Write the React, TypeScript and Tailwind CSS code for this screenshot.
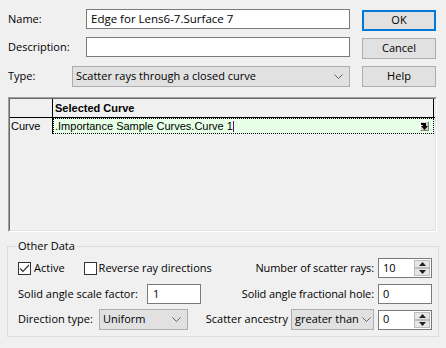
import React from "react"

const ui = "font-['Open_Sans',sans-serif] text-[11px] text-black"

function Chevron() {
  return (
    <svg width="9" height="5" viewBox="0 0 9 5" className="shrink-0">
      <path d="M0.5 0.5 L4.5 4.5 L8.5 0.5" fill="none" stroke="#606060" strokeWidth="1" />
    </svg>
  )
}

function Select({ value, className }: { value: string; className: string }) {
  return (
    <div className={`flex items-center justify-between bg-[#e1e1e1] border border-[#adadad] pl-[3px] pr-[6px] ${className}`}>
      <span className="whitespace-nowrap">{value}</span>
      <Chevron />
    </div>
  )
}

function Spinner({ value }: { value: string }) {
  return (
    <div className="flex items-center w-[54px] h-[20px] bg-white border border-[#7a7a7a] pl-[4px] pr-[1px]">
      <span className="flex-1">{value}</span>
      <div className="flex flex-col w-[16px] h-[16px]">
        {[0, 1].map((i) => (
          <div key={i} className="flex-1 flex items-center justify-center bg-[#e6e6e6] border border-[#bcbcbc]">
            <svg width="7" height="4" viewBox="0 0 7 4">
              <path d={i === 0 ? "M3.5 0 L7 4 L0 4 Z" : "M0 0 L7 0 L3.5 4 Z"} fill="#222" />
            </svg>
          </div>
        ))}
      </div>
    </div>
  )
}

function Checkbox({ checked }: { checked: boolean }) {
  return (
    <div className="w-[13px] h-[13px] bg-white border border-[#333] flex items-center justify-center">
      {checked && (
        <svg width="11" height="9" viewBox="0 0 11 9">
          <path d="M1 4.5 L4 7.5 L10 1" fill="none" stroke="#333" strokeWidth="1.2" />
        </svg>
      )}
    </div>
  )
}

function Button({ label, focus }: { label: string; focus?: boolean }) {
  return (
    <div
      className={`h-[21px] flex items-center justify-center bg-[#e1e1e1] ${
        focus ? "border-2 border-[#0078d7]" : "border border-[#adadad]"
      }`}
    >
      {label}
    </div>
  )
}

export default function App() {
  return (
    <div className={`w-[446px] h-[348px] bg-[#f0f0f0] overflow-hidden ${ui}`}>
      {/* top fields + buttons */}
      <div className="flex pt-[9px] pl-[8px]">
        <div className="w-[342px] flex flex-col">
          <div className="flex items-center h-[20px]">
            <span className="w-[78px]">Name:</span>
            <div className="w-[264px] h-[20px] bg-white border border-[#7a7a7a] flex items-center px-[4px] text-[11.5px]">
              Edge for Lens6-7.Surface 7
            </div>
          </div>
          <div className="flex items-center h-[20px] mt-[8px]">
            <span className="w-[78px]">Description:</span>
            <div className="w-[264px] h-[20px] bg-white border border-[#7a7a7a]" />
          </div>
          <div className="flex items-center h-[21px] mt-[9px]">
            <span className="w-[64px]">Type:</span>
            <Select value="Scatter rays through a closed curve" className="w-[278px] h-[21px]" />
          </div>
        </div>
        <div className="w-[74px] ml-[12px] flex flex-col pt-[1px] gap-[7px]">
          <Button label="OK" focus />
          <Button label="Cancel" />
          <Button label="Help" />
        </div>
      </div>

      {/* curve grid */}
      <div className="mx-[8px] mt-[10px] h-[135px] w-[429px] border border-t-[#a0a0a0] border-l-[#a0a0a0] border-b-white border-r-white">
        <div className="h-full border border-t-[#696969] border-l-[#696969] border-b-[#e3e3e3] border-r-[#e3e3e3] font-['Liberation_Sans',Arial,sans-serif] text-[11px]">
          <div className="flex h-[19px] border-b border-black">
            <div className="w-[43px] border-r border-black" />
            <div className="w-[381px] border-r border-black font-bold pl-[2px] flex items-center">Selected Curve</div>
          </div>
          <div className="flex h-[16px]">
            <div className="w-[43px] border-r border-black flex items-center pl-[1px]">Curve</div>
            <div className="w-[381px] bg-[#e6ffe6] border border-dotted border-black flex items-center justify-between pl-[1px] pr-[4px]">
              <span>
                .Importance Sample Curves.Curve 1<span className="inline-block w-px h-[11px] bg-[#800080] align-middle" />
              </span>
              <div className="w-[9px] h-[10px] bg-[#d4d0c8] border border-t-white border-l-white border-b-[#808080] border-r-[#808080] flex items-center justify-center">
                <svg width="7" height="7" viewBox="0 0 7 7">
                  <path d="M0 0 H5 V3 H7 L3.5 7 L0 3 H2 V2 H0 Z" fill="#000" />
                </svg>
              </div>
            </div>
          </div>
        </div>
      </div>

      {/* group box */}
      <div className="relative mx-[7px] mt-[14px] h-[91px] border border-[#dcdcdc] pt-[11px] pl-[10px] pr-[6px]">
        <span className="absolute -top-[9px] left-[8px] px-[2px] bg-[#f0f0f0]">Other Data</span>
        <div className="flex items-center justify-between h-[20px]">
          <div className="flex items-center">
            <Checkbox checked />
            <span className="ml-[3px]">Active</span>
            <div className="ml-[19px]"><Checkbox checked={false} /></div>
            <span className="ml-[2px]">Reverse ray directions</span>
          </div>
          <div className="flex items-center gap-[4px]">
            <span className="tracking-[-0.1px]">Number of scatter rays:</span>
            <Spinner value="10" />
          </div>
        </div>
        <div className="flex items-center justify-between h-[20px] mt-[6px]">
          <div className="flex items-center">
            <span className="w-[129px]">Solid angle scale factor:</span>
            <div className="w-[54px] h-[20px] bg-white border border-[#7a7a7a] flex items-center px-[5px]">1</div>
          </div>
          <div className="flex items-center gap-[4px]">
            <span className="tracking-[-0.1px]">Solid angle fractional hole:</span>
            <div className="w-[54px] h-[20px] bg-white border border-[#7a7a7a] flex items-center px-[4px]">0</div>
          </div>
        </div>
        <div className="flex items-center justify-between h-[21px] mt-[5px]">
          <div className="flex items-center">
            <span className="w-[81px]">Direction type:</span>
            <Select value="Uniform" className="w-[89px] h-[21px]" />
          </div>
          <div className="flex items-center">
            <span className="mr-[3px]">Scatter ancestry</span>
            <Select value="greater than" className="w-[83px] h-[21px] pl-[2px] pr-[3px] gap-[3px]" />
            <div className="ml-[4px]"><Spinner value="0" /></div>
          </div>
        </div>
      </div>
    </div>
  )
}
